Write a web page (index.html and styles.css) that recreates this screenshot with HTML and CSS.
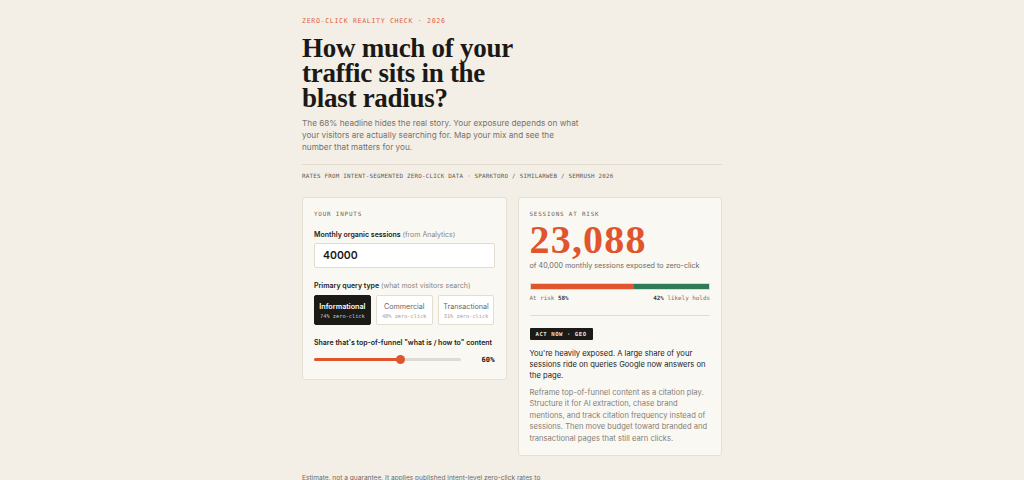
FILE: index.html
```html
<!DOCTYPE html>
<html lang="en">
<head>
<meta charset="utf-8">
<title>Zero-click reality check</title>
<link rel="stylesheet" href="styles.css">
</head>
<body>
<main class="page">
  <p class="eyebrow">ZERO-CLICK REALITY CHECK · 2026</p>
  <h1 class="title"><span class="tl">How much of your</span><span class="tl">traffic sits in the</span><span class="tl">blast radius?</span></h1>
  <p class="lede">The 68% headline hides the real story. Your exposure depends on what your visitors are actually searching for. Map your mix and see the number that matters for you.</p>
  <hr class="rule">
  <p class="source">RATES FROM INTENT-SEGMENTED ZERO-CLICK DATA · SPARKTORO / SIMILARWEB / SEMRUSH 2026</p>

  <div class="cards">
    <section class="card inputs">
      <h2 class="card-label">YOUR INPUTS</h2>
      <label class="field-label">Monthly organic sessions <span class="hint">(from Analytics)</span></label>
      <div class="input">40000</div>

      <label class="field-label gap">Primary query type <span class="hint">(what most visitors search)</span></label>
      <div class="chips">
        <div class="chip active"><span class="chip-name">Informational</span><span class="chip-rate">74% zero-click</span></div>
        <div class="chip"><span class="chip-name">Commercial</span><span class="chip-rate">40% zero-click</span></div>
        <div class="chip"><span class="chip-name">Transactional</span><span class="chip-rate">31% zero-click</span></div>
      </div>

      <label class="field-label gap">Share that's top-of-funnel "what is / how to" content</label>
      <div class="slider-row">
        <div class="slider">
          <div class="track"><div class="fill" style="width:59%"></div></div>
          <div class="thumb" style="left:59%"></div>
        </div>
        <span class="slider-val">60%</span>
      </div>
    </section>

    <section class="card result">
      <h2 class="card-label">SESSIONS AT RISK</h2>
      <div class="big">23,088</div>
      <p class="sub">of 40,000 monthly sessions exposed to zero-click</p>
      <div class="bar"><div class="bar-risk" style="width:58%"></div><div class="bar-hold"></div></div>
      <div class="bar-labels"><span>At risk <b>58%</b></span><span><b>42%</b> likely holds</span></div>
      <hr class="divider">
      <span class="badge">ACT NOW · GEO</span>
      <p class="verdict">You're heavily exposed. A large share of your sessions ride on queries Google now answers on the page.</p>
      <p class="advice">Reframe top-of-funnel content as a citation play. Structure it for AI extraction, chase brand mentions, and track citation frequency instead of sessions. Then move budget toward branded and transactional pages that still earn clicks.</p>
    </section>
  </div>

  <p class="foot">Estimate, not a guarantee. It applies published intent-level zero-click rates to your own traffic mix.</p>
</main>
</body>
</html>
```

FILE: styles.css
```css
* { box-sizing: border-box; }
html, body { margin: 0; padding: 0; }
body {
  background: #f3efe7;
  color: #1d1b18;
  font-family: Inter, "Noto Sans", sans-serif;
}
.page {
  width: 420px;
  margin: 0 auto;
  padding-top: 16px;
}
.eyebrow {
  margin: 0;
  font-family: "DejaVu Sans Mono", monospace;
  font-size: 6.6px;
  line-height: 10px;
  letter-spacing: 0.1em;
  color: #e0613a;
}
.title {
  margin: 10px 0 0;
  font-family: "Liberation Serif", serif;
  font-weight: 700;
  font-size: 27px;
  line-height: 25px;
  letter-spacing: -0.01em;
  color: #1b1915;
}
.tl {
  display: block;
  height: 25px;
}
.lede {
  margin: 6px 0 0;
  width: 281px;
  font-size: 8.2px;
  line-height: 12px;
  color: #77716a;
}
.rule {
  margin: 11px 0 0;
  border: 0;
  border-top: 1px solid #e2dbcd;
}
.source {
  margin: 6px 0 0;
  font-family: "DejaVu Sans Mono", monospace;
  font-size: 5.85px;
  line-height: 10px;
  letter-spacing: 0.04em;
  color: #5f5a52;
}
.cards {
  margin-top: 16px;
  display: grid;
  grid-template-columns: 1fr 1fr;
  gap: 11px;
  align-items: start;
}
.card {
  background: #faf8f3;
  border: 1px solid #e6e0d3;
  border-radius: 3px;
  padding: 11px 11px 14px;
  display: flex;
  flex-direction: column;
}
.card.result { padding-bottom: 11px; }
.card-label {
  margin: 0;
  font-family: "DejaVu Sans Mono", monospace;
  font-weight: 400;
  font-size: 5.9px;
  line-height: 10px;
  letter-spacing: 0.14em;
  color: #6a645b;
}
.field-label {
  display: block;
  margin-top: 10px;
  font-size: 7px;
  line-height: 11px;
  font-weight: 600;
  color: #1d1b18;
}
.field-label.gap { margin-top: 12px; }
.hint { font-weight: 400; color: #8b857c; }
.input {
  margin-top: 3px;
  height: 25px;
  background: #fff;
  border: 1px solid #e2dccf;
  border-radius: 2px;
  padding: 0 8px;
  display: flex;
  align-items: center;
  font-size: 10.5px;
  font-weight: 600;
  color: #1b1915;
}
.chips {
  margin-top: 4px;
  display: grid;
  grid-template-columns: 1fr 1fr 1fr;
  gap: 5px;
}
.chip {
  height: 30px;
  background: #fff;
  border: 1px solid #e4ded1;
  border-radius: 2px;
  display: flex;
  flex-direction: column;
  align-items: center;
  justify-content: center;
  gap: 2px;
}
.chip-name { font-size: 7.2px; line-height: 9px; color: #6b665e; }
.chip-rate {
  font-family: "DejaVu Sans Mono", monospace;
  font-size: 5.3px;
  line-height: 6px;
  color: #a39d94;
}
.chip.active { background: #1c1a17; border-color: #1c1a17; }
.chip.active .chip-name { color: #fff; font-weight: 600; }
.chip.active .chip-rate { color: #cfcac2; }
.slider-row {
  margin-top: 5px;
  height: 12px;
  display: flex;
  align-items: center;
  justify-content: space-between;
}
.slider {
  position: relative;
  width: 147px;
  height: 12px;
  display: flex;
  align-items: center;
}
.track {
  width: 100%;
  height: 3px;
  border-radius: 2px;
  background: #dedbd5;
  overflow: hidden;
}
.fill { height: 100%; background: #e0552d; }
.thumb {
  position: absolute;
  top: 50%;
  width: 9px;
  height: 9px;
  margin: -4.5px 0 0 -4.5px;
  border-radius: 50%;
  background: #e0552d;
}
.slider-val {
  font-family: "DejaVu Sans Mono", monospace;
  font-size: 7.2px;
  font-weight: 700;
  color: #1d1b18;
}
.big {
  margin-top: 3px;
  font-family: "Liberation Serif", serif;
  font-weight: 700;
  font-size: 40px;
  line-height: 36px;
  letter-spacing: 1.2px;
  color: #e0552d;
}
.sub {
  margin: 3px 0 0;
  font-size: 7.2px;
  line-height: 10px;
  color: #6f6a62;
}
.bar {
  margin-top: 12px;
  height: 7px;
  display: flex;
  border: 1px solid #e0d9cb;
}
.bar-risk { background: #e0552d; }
.bar-hold { flex: 1; background: #2f7a57; }
.bar-labels {
  margin-top: 4px;
  display: flex;
  justify-content: space-between;
  font-family: "DejaVu Sans Mono", monospace;
  font-size: 5.9px;
  line-height: 9px;
  color: #77716a;
}
.bar-labels b { color: #3b3833; }
.divider {
  width: 100%;
  margin: 12px 0 0;
  border: 0;
  border-top: 1px solid #e3ddd0;
}
.badge {
  align-self: flex-start;
  margin-top: 12px;
  background: #1c1a17;
  color: #e9e4da;
  border-radius: 1px;
  padding: 0 6px;
  height: 12px;
  line-height: 12px;
  font-family: "DejaVu Sans Mono", monospace;
  font-weight: 700;
  font-size: 5.6px;
  letter-spacing: 0.1em;
}
.verdict {
  margin: 8px 0 0;
  font-size: 7.6px;
  line-height: 11px;
  color: #1d1b18;
}
.advice {
  margin: 6px 0 0;
  font-size: 7.6px;
  line-height: 11.4px;
  color: #857f76;
}
.foot {
  margin: 17px 0 0;
  font-size: 6.6px;
  line-height: 10px;
  color: #6f6a62;
  width: 245px;
}
```
